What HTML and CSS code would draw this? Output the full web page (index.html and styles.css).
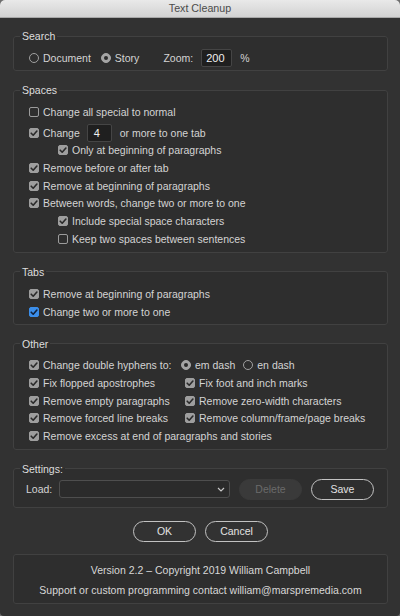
FILE: index.html
```html
<!DOCTYPE html>
<html>
<head>
<meta charset="utf-8">
<title>Text Cleanup</title>
<link rel="stylesheet" href="styles.css">
</head>
<body>
<div class="window">
  <div class="titlebar">Text Cleanup</div>
  <div class="content">

    <fieldset class="panel panel-first">
      <legend>Search</legend>
      <div class="pbody pb-search">
        <div class="row">
          <span class="radio"></span><span class="lbl">Document</span>
          <span class="radio on gap-story"></span><span class="lbl">Story</span>
          <span class="zoom-label">Zoom:</span>
          <span class="field field-zoom">200</span>
          <span class="pct">%</span>
        </div>
      </div>
    </fieldset>

    <fieldset class="panel">
      <legend>Spaces</legend>
      <div class="pbody pb-compact">
        <div class="row"><span class="cb"></span><span class="lbl">Change all special to normal</span></div>
        <div class="row row-gap"><span class="cb on"><svg viewBox="0 0 10 10"><path d="M2.2 5.2 L4.2 7.2 L7.9 3"/></svg></span><span class="lbl">Change</span><span class="field field-num">4</span><span class="after-num">or more to one tab</span></div>
        <div class="row indent"><span class="cb on"><svg viewBox="0 0 10 10"><path d="M2.2 5.2 L4.2 7.2 L7.9 3"/></svg></span><span class="lbl">Only at beginning of paragraphs</span></div>
        <div class="row"><span class="cb on"><svg viewBox="0 0 10 10"><path d="M2.2 5.2 L4.2 7.2 L7.9 3"/></svg></span><span class="lbl">Remove before or after tab</span></div>
        <div class="row"><span class="cb on"><svg viewBox="0 0 10 10"><path d="M2.2 5.2 L4.2 7.2 L7.9 3"/></svg></span><span class="lbl">Remove at beginning of paragraphs</span></div>
        <div class="row"><span class="cb on"><svg viewBox="0 0 10 10"><path d="M2.2 5.2 L4.2 7.2 L7.9 3"/></svg></span><span class="lbl">Between words, change two or more to one</span></div>
        <div class="row indent"><span class="cb on"><svg viewBox="0 0 10 10"><path d="M2.2 5.2 L4.2 7.2 L7.9 3"/></svg></span><span class="lbl">Include special space characters</span></div>
        <div class="row indent"><span class="cb"></span><span class="lbl">Keep two spaces between sentences</span></div>
      </div>
    </fieldset>

    <fieldset class="panel">
      <legend>Tabs</legend>
      <div class="pbody">
        <div class="row"><span class="cb on"><svg viewBox="0 0 10 10"><path d="M2.2 5.2 L4.2 7.2 L7.9 3"/></svg></span><span class="lbl">Remove at beginning of paragraphs</span></div>
        <div class="row"><span class="cb on blue"><svg viewBox="0 0 10 10"><path d="M2.2 5.2 L4.2 7.2 L7.9 3"/></svg></span><span class="lbl">Change two or more to one</span></div>
      </div>
    </fieldset>

    <fieldset class="panel">
      <legend>Other</legend>
      <div class="pbody pb-compact">
        <div class="grid">
          <div class="row"><span class="cb on"><svg viewBox="0 0 10 10"><path d="M2.2 5.2 L4.2 7.2 L7.9 3"/></svg></span><span class="lbl">Change double hyphens to:</span></div>
          <div class="row dash-group"><span class="radio on"></span><span class="lbl">em dash</span><span class="radio gap-en"></span><span class="lbl">en dash</span></div>
          <div class="row"><span class="cb on"><svg viewBox="0 0 10 10"><path d="M2.2 5.2 L4.2 7.2 L7.9 3"/></svg></span><span class="lbl">Fix flopped apostrophes</span></div>
          <div class="row"><span class="cb on"><svg viewBox="0 0 10 10"><path d="M2.2 5.2 L4.2 7.2 L7.9 3"/></svg></span><span class="lbl">Fix foot and inch marks</span></div>
          <div class="row"><span class="cb on"><svg viewBox="0 0 10 10"><path d="M2.2 5.2 L4.2 7.2 L7.9 3"/></svg></span><span class="lbl">Remove empty paragraphs</span></div>
          <div class="row"><span class="cb on"><svg viewBox="0 0 10 10"><path d="M2.2 5.2 L4.2 7.2 L7.9 3"/></svg></span><span class="lbl">Remove zero-width characters</span></div>
          <div class="row"><span class="cb on"><svg viewBox="0 0 10 10"><path d="M2.2 5.2 L4.2 7.2 L7.9 3"/></svg></span><span class="lbl">Remove forced line breaks</span></div>
          <div class="row"><span class="cb on"><svg viewBox="0 0 10 10"><path d="M2.2 5.2 L4.2 7.2 L7.9 3"/></svg></span><span class="lbl">Remove column/frame/page breaks</span></div>
          <div class="row span2"><span class="cb on"><svg viewBox="0 0 10 10"><path d="M2.2 5.2 L4.2 7.2 L7.9 3"/></svg></span><span class="lbl">Remove excess at end of paragraphs and stories</span></div>
        </div>
      </div>
    </fieldset>

    <fieldset class="panel">
      <legend>Settings:</legend>
      <div class="pbody pb-settings">
        <div class="row row-load">
          <span class="load-label">Load:</span>
          <span class="dropdown"><svg class="chev" viewBox="0 0 8 5"><path d="M1 1 L4 4 L7 1"/></svg></span>
          <span class="btn btn-disabled">Delete</span>
          <span class="btn">Save</span>
        </div>
      </div>
    </fieldset>

    <div class="actions">
      <span class="btn">OK</span>
      <span class="btn">Cancel</span>
    </div>

    <div class="footer">
      <div class="fline">Version 2.2 – Copyright 2019 William Campbell</div>
      <div class="fline">Support or custom programming contact william@marspremedia.com</div>
    </div>

  </div>
</div>
</body>
</html>
```
FILE: styles.css
```css
html, body {
  margin: 0;
  padding: 0;
}
body {
  width: 400px;
  height: 616px;
  overflow: hidden;
  background: #6e6e6e;
  font-family: "Liberation Sans", Arial, sans-serif;
  font-size: 10.5px;
  color: #d4d4d4;
}
.window {
  width: 400px;
  height: 616px;
  background: #323232;
  border-radius: 5px 5px 4px 4px;
  overflow: hidden;
  display: flex;
  flex-direction: column;
}
.titlebar {
  flex: none;
  height: 18px;
  line-height: 17px;
  box-sizing: border-box;
  text-align: center;
  font-size: 10.7px;
  color: #4b4b4b;
  background: linear-gradient(#e9e9e9, #d2d2d2);
  border-bottom: 1px solid #a8a8a8;
}
.content {
  padding: 0 12px 0 13px;
  display: flex;
  flex-direction: column;
}
.panel {
  margin: 12px 0 0;
  padding: 0;
  min-width: 0;
  border: 1px solid #414141;
  border-radius: 3px;
  background: #2e2e2e;
}
.panel-first {
  margin-top: 11px;
}
.panel legend {
  margin-left: 6px;
  padding: 0 2px;
  line-height: 14px;
  color: #dedede;
}
.pbody {
  padding: 6px 0 3px 15px;
}
.pb-compact {
  padding-bottom: 4px;
}
.pb-compact .row {
  height: 17.67px;
}
.pb-compact .row-gap {
  height: 18px;
  margin-top: 3px;
}
.pb-settings {
  padding: 3px 0 7px 12px;
}
.row {
  display: flex;
  align-items: center;
  height: 18px;
  white-space: nowrap;
}
.indent {
  margin-left: 29px;
}
.lbl {
  margin-left: 4px;
}
.cb {
  flex: none;
  width: 10px;
  height: 10px;
  box-sizing: border-box;
  border: 1px solid #9c9c9c;
  border-radius: 2px;
  display: flex;
}
.cb.on {
  background: #9e9e9e;
  border-color: #9e9e9e;
}
.cb.blue {
  background: #3b8eea;
  border-color: #3b8eea;
}
.cb svg {
  width: 10px;
  height: 10px;
  margin: -1px;
}
.cb svg path {
  fill: none;
  stroke: #2a2a2a;
  stroke-width: 1.6;
  stroke-linecap: round;
  stroke-linejoin: round;
}
.cb.blue svg path {
  stroke: #10203a;
}
.radio {
  flex: none;
  width: 10px;
  height: 10px;
  box-sizing: border-box;
  border: 1px solid #a0a0a0;
  border-radius: 50%;
  display: flex;
  align-items: center;
  justify-content: center;
}
.radio.on {
  background: #a4a4a4;
  border-color: #a4a4a4;
}
.radio.on::after {
  content: "";
  width: 4px;
  height: 4px;
  border-radius: 50%;
  background: #2a2a2a;
}
.gap-story {
  margin-left: 10px;
}
.zoom-label {
  margin-left: 24px;
}
.field {
  flex: none;
  height: 18px;
  box-sizing: border-box;
  background: #1f1f1f;
  border: 1px solid #454545;
  border-radius: 2px;
  color: #f0f0f0;
  line-height: 16px;
  font-size: 11px;
}
.field-zoom {
  width: 31px;
  margin-left: 8px;
  padding-left: 4px;
}
.pct {
  margin-left: 8px;
}
.field-num {
  width: 25px;
  margin-left: 7px;
  padding-left: 6px;
}
.after-num {
  margin-left: 8px;
}
.grid {
  display: grid;
  grid-template-columns: 156px auto;
}
.span2 {
  grid-column: 1 / 3;
}
.dash-group {
  margin-left: -4px;
}
.gap-en {
  margin-left: 8px;
}
.row-load {
  height: 21px;
}
.load-label {
  width: 33px;
  flex: none;
}
.dropdown {
  flex: none;
  width: 171px;
  height: 18px;
  box-sizing: border-box;
  border: 1px solid #4e4e4e;
  border-radius: 3px;
  background: #2b2b2b;
  display: flex;
  align-items: center;
  justify-content: flex-end;
  padding-right: 4px;
}
.chev {
  width: 8px;
  height: 5px;
}
.chev path {
  fill: none;
  stroke: #c8c8c8;
  stroke-width: 1.2;
}
.btn {
  flex: none;
  width: 63px;
  height: 21px;
  box-sizing: border-box;
  border: 1px solid #c2c2c2;
  border-radius: 11px;
  text-align: center;
  line-height: 19px;
  color: #e2e2e2;
  margin-left: 9px;
}
.btn-disabled {
  border-color: #3a3a3a;
  background: #3a3a3a;
  color: #6a6a6a;
}
.actions {
  margin-top: 13px;
  display: flex;
  justify-content: center;
  gap: 9px;
}
.actions .btn {
  margin-left: 0;
}
.footer {
  margin-top: 12px;
  border: 1px solid #414141;
  border-radius: 3px;
  background: #2e2e2e;
  padding: 5px 0 3px;
  text-align: center;
  color: #d8d8d8;
}
.fline {
  line-height: 20px;
}
```
